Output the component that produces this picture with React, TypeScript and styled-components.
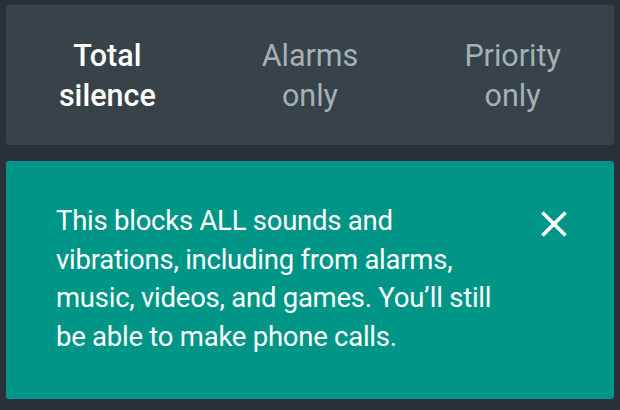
import React from "react";
import styled, { createGlobalStyle } from "styled-components";

const Global = createGlobalStyle`
  html, body { margin: 0; padding: 0; background: #263238; }
  body { font-family: Roboto, "Noto Sans", sans-serif; }
`;

const Page = styled.div`
  width: 620px;
  height: 410px;
  box-sizing: border-box;
  padding: 5px 6px 11px;
  display: flex;
  flex-direction: column;
  gap: 16px;
  background: #263238;
`;

const Tabs = styled.div`
  height: 140px;
  border-radius: 3px;
  background: #384349;
  display: grid;
  grid-template-columns: repeat(3, 1fr);
  align-items: center;
`;

const Tab = styled.div<{ $active?: boolean }>`
  text-align: center;
  font-size: 30.5px;
  line-height: 40px;
  font-weight: ${(p) => (p.$active ? 500 : 400)};
  color: ${(p) => (p.$active ? "#ffffff" : "#a3b1b7")};
  padding-top: 2px;
`;

const Card = styled.div`
  flex: 1;
  border-radius: 3px;
  background: #009687;
  display: flex;
  align-items: flex-start;
  padding: 41px 0 0 50px;
  box-sizing: border-box;
`;

const Message = styled.p`
  margin: 0;
  width: 455px;
  font-size: 27.5px;
  letter-spacing: -0.25px;
  line-height: 38.5px;
  color: #ffffff;
`;

const Close = styled.button`
  margin-left: 21px;
  margin-top: 0;
  width: 44px;
  height: 44px;
  border: none;
  background: transparent;
  padding: 0;
  display: flex;
  align-items: center;
  justify-content: center;
  cursor: pointer;
`;

export default function App() {
  return (
    <>
      <Global />
      <Page>
        <Tabs>
          <Tab $active>
            Total
            <br />
            silence
          </Tab>
          <Tab>
            Alarms
            <br />
            only
          </Tab>
          <Tab>
            Priority
            <br />
            only
          </Tab>
        </Tabs>
        <Card>
          <Message>
            This blocks ALL sounds and vibrations, including from alarms, music, videos, and games. You’ll still be able to make phone calls.
          </Message>
          <Close aria-label="Close">
            <svg width="44" height="44" viewBox="0 0 24 24">
              <path
                d="M19 6.41 17.59 5 12 10.59 6.41 5 5 6.41 10.59 12 5 17.59 6.41 19 12 13.41 17.59 19 19 17.59 13.41 12z"
                fill="#ffffff"
              />
            </svg>
          </Close>
        </Card>
      </Page>
    </>
  );
}
